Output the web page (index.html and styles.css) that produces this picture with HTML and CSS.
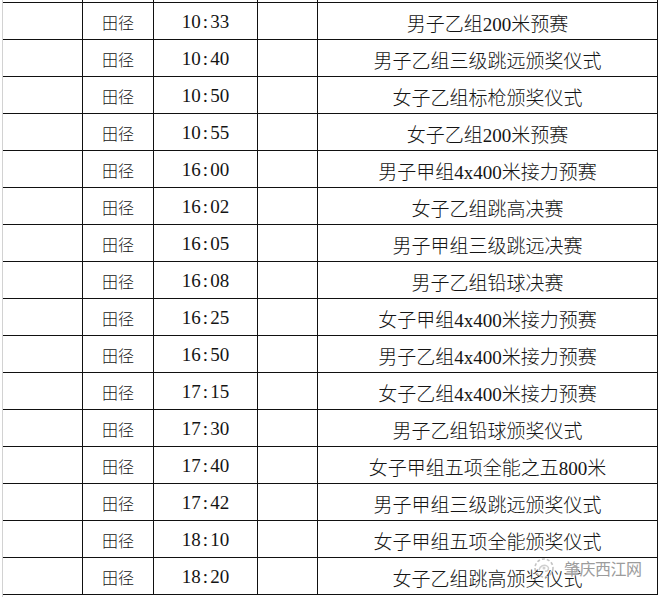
FILE: index.html
```html
<!DOCTYPE html>
<html lang="zh-CN">
<head>
<meta charset="utf-8">
<title>赛程表</title>
<link rel="stylesheet" href="styles.css">
</head>
<body>
<div class="sheet">
  <div class="row row--cut"><div class="cell"></div><div class="cell"></div><div class="cell"></div><div class="cell"></div><div class="cell"></div></div>
  <div class="row"><div class="cell"></div><div class="cell sport">田径</div><div class="cell time">10<span class="colon">:</span>33</div><div class="cell"></div><div class="cell event">男子乙组200米预赛</div></div>
  <div class="row"><div class="cell"></div><div class="cell sport">田径</div><div class="cell time">10<span class="colon">:</span>40</div><div class="cell"></div><div class="cell event">男子乙组三级跳远颁奖仪式</div></div>
  <div class="row"><div class="cell"></div><div class="cell sport">田径</div><div class="cell time">10<span class="colon">:</span>50</div><div class="cell"></div><div class="cell event">女子乙组标枪颁奖仪式</div></div>
  <div class="row"><div class="cell"></div><div class="cell sport">田径</div><div class="cell time">10<span class="colon">:</span>55</div><div class="cell"></div><div class="cell event">女子乙组200米预赛</div></div>
  <div class="row"><div class="cell"></div><div class="cell sport">田径</div><div class="cell time">16<span class="colon">:</span>00</div><div class="cell"></div><div class="cell event">男子甲组4x400米接力预赛</div></div>
  <div class="row"><div class="cell"></div><div class="cell sport">田径</div><div class="cell time">16<span class="colon">:</span>02</div><div class="cell"></div><div class="cell event">女子乙组跳高决赛</div></div>
  <div class="row"><div class="cell"></div><div class="cell sport">田径</div><div class="cell time">16<span class="colon">:</span>05</div><div class="cell"></div><div class="cell event">男子甲组三级跳远决赛</div></div>
  <div class="row"><div class="cell"></div><div class="cell sport">田径</div><div class="cell time">16<span class="colon">:</span>08</div><div class="cell"></div><div class="cell event">男子乙组铅球决赛</div></div>
  <div class="row"><div class="cell"></div><div class="cell sport">田径</div><div class="cell time">16<span class="colon">:</span>25</div><div class="cell"></div><div class="cell event">女子甲组4x400米接力预赛</div></div>
  <div class="row"><div class="cell"></div><div class="cell sport">田径</div><div class="cell time">16<span class="colon">:</span>50</div><div class="cell"></div><div class="cell event">男子乙组4x400米接力预赛</div></div>
  <div class="row"><div class="cell"></div><div class="cell sport">田径</div><div class="cell time">17<span class="colon">:</span>15</div><div class="cell"></div><div class="cell event">女子乙组4x400米接力预赛</div></div>
  <div class="row"><div class="cell"></div><div class="cell sport">田径</div><div class="cell time">17<span class="colon">:</span>30</div><div class="cell"></div><div class="cell event">男子乙组铅球颁奖仪式</div></div>
  <div class="row"><div class="cell"></div><div class="cell sport">田径</div><div class="cell time">17<span class="colon">:</span>40</div><div class="cell"></div><div class="cell event">女子甲组五项全能之五800米</div></div>
  <div class="row"><div class="cell"></div><div class="cell sport">田径</div><div class="cell time">17<span class="colon">:</span>42</div><div class="cell"></div><div class="cell event">男子甲组三级跳远颁奖仪式</div></div>
  <div class="row"><div class="cell"></div><div class="cell sport">田径</div><div class="cell time">18<span class="colon">:</span>10</div><div class="cell"></div><div class="cell event">女子甲组五项全能颁奖仪式</div></div>
  <div class="row"><div class="cell"></div><div class="cell sport">田径</div><div class="cell time">18<span class="colon">:</span>20</div><div class="cell"></div><div class="cell event">女子乙组跳高颁奖仪式</div></div>

  <div class="watermark">
    <svg class="watermark__logo" width="22" height="22" viewBox="0 0 22 22" aria-hidden="true">
      <circle cx="11" cy="11" r="9" fill="none" stroke="#c4c4c4" stroke-width="1.6" stroke-dasharray="3 2"/>
      <path d="M6 13c1-4 5-6 8-4s1 6-2 5" fill="none" stroke="#cfcfcf" stroke-width="1.4"/>
      <circle cx="11" cy="11" r="1.5" fill="#d0d0d0"/>
    </svg>
    <span class="watermark__text">肇庆西江网</span>
  </div>
</div>
</body>
</html>
```

FILE: styles.css
```css
html, body {
  margin: 0;
  background: #ffffff;
}

body {
  font-family: "Liberation Serif", "Noto Sans CJK SC", serif;
  color: #141414;
}

.sheet {
  position: relative;
  margin-left: 2px;
  border-left: 1px solid #d2d2d2;
  height: 597px;
  overflow: hidden;
}

.row {
  display: grid;
  grid-template-columns: 80px 71px 104px 60px 340px;
  width: 655px;
  height: 37px;
  box-sizing: border-box;
  border-bottom: 1px solid #111;
}

.row--cut {
  height: 3px;
}

.cell {
  display: flex;
  align-items: center;
  justify-content: center;
  padding-top: 2px;
  box-sizing: border-box;
  border-right: 1px solid #111;
  white-space: nowrap;
}

.row--cut .cell {
  padding-top: 0;
}

.sport {
  font-family: "Noto Sans CJK SC", sans-serif;
  font-weight: 300;
  font-size: 16px;
}

.time {
  font-size: 19px;
}

.colon {
  margin: 0 2px;
}

.event {
  font-family: "Liberation Serif", "Noto Sans CJK SC", serif;
  font-weight: 300;
  font-size: 19px;
}

.watermark {
  position: absolute;
  left: 530px;
  top: 556px;
  display: flex;
  align-items: center;
  gap: 9px;
}

.watermark__text {
  font-family: "Noto Sans CJK SC", sans-serif;
  font-size: 16px;
  color: #9c9c9c;
  letter-spacing: -0.5px;
  text-shadow: 0 0 2px #fff, 0 0 2px #fff;
}
```
